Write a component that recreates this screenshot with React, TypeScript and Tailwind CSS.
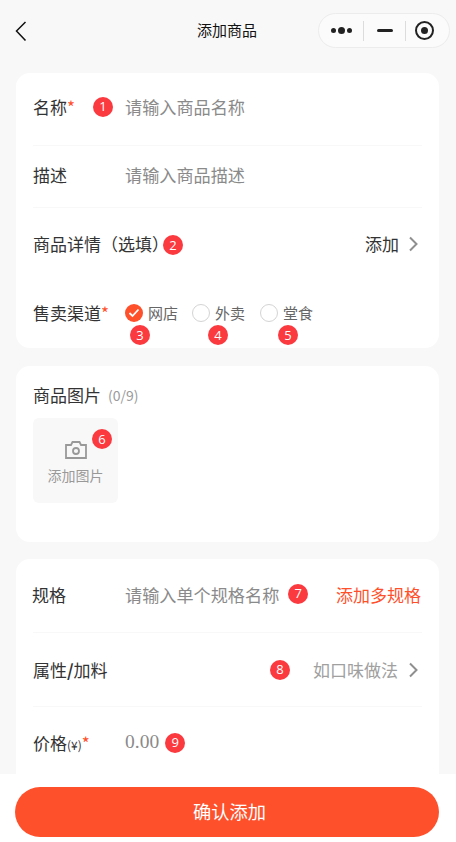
import React from "react";

const Badge = ({ n, className = "" }: { n: number; className?: string }) => (
  <span className={`flex h-5 w-5 shrink-0 items-center justify-center rounded-full bg-[#fb3a40] text-[13px] leading-none text-white ${className}`} style={{ fontFamily: '"Open Sans", sans-serif' }}>
    {n}
  </span>
);

const Star = () => <span className="text-[#ff4f2b]">*</span>;

const Chevron = () => (
  <svg width="10" height="16" viewBox="0 0 10 16" fill="none" className="shrink-0">
    <path d="M2 1.5 8.5 8 2 14.5" stroke="#8f8f8f" strokeWidth="2" />
  </svg>
);

const Channel = ({ label, checked, n, w, badge }: { label: string; checked?: boolean; n: number; w: string; badge: string }) => (
  <div className={`mt-[2px] flex flex-col ${w}`}>
    <div className="flex items-center gap-[5px]">
      {checked ? (
        <span className="flex h-[18px] w-[18px] items-center justify-center rounded-full bg-[#ff502c]">
          <svg width="12" height="10" viewBox="0 0 12 10" fill="none">
            <path d="M1.5 5 4.5 8 10.5 1.5" stroke="#fff" strokeWidth="1.8" />
          </svg>
        </span>
      ) : (
        <span className="h-[18px] w-[18px] rounded-full border-[1.5px] border-[#d4d4d4]" />
      )}
      <span className="w-[40px] whitespace-nowrap text-[15px] leading-5 text-[#666]">{label}</span>
    </div>
    <Badge n={n} className={`mt-[2px] ${badge}`} />
  </div>
);

export default function App() {
  return (
    <div
      className="flex h-[842px] w-[456px] flex-col overflow-hidden bg-[#f8f8f8] text-[17px] text-[#333]"
      style={{ fontFamily: '"Noto Sans CJK SC", sans-serif' }}
    >
      <header className="flex h-[73px] shrink-0 items-start justify-between pl-[15px] pr-[6px] pt-[13px]">
        <svg width="12" height="20" viewBox="0 0 12 20" fill="none" className="mt-[8px]">
          <path d="M10.5 1 1.5 10l9 9.5" stroke="#111" strokeWidth="1.5" />
        </svg>
        <span className="ml-[54px] mt-[5px] flex-1 pl-[116px] text-[15px] leading-[24px] text-[#111]">添加商品</span>
        <div className="flex h-[35px] w-[132px] items-center rounded-full border border-[#ececec] bg-[#fbfbfb]">
          <div className="flex w-[44px] items-center justify-center gap-[2px] pl-[1px]">
            <span className="h-[5px] w-[5px] rounded-full bg-[#222]" />
            <span className="h-[7px] w-[7px] rounded-full bg-[#222]" />
            <span className="h-[5px] w-[5px] rounded-full bg-[#222]" />
          </div>
          <span className="h-5 w-px bg-[#dcdcdc]" />
          <div className="flex w-[41px] justify-center">
            <span className="h-[3px] w-4 rounded-full bg-[#222]" />
          </div>
          <span className="h-5 w-px bg-[#dcdcdc]" />
          <div className="flex flex-1 justify-center pr-[6px]">
            <span className="flex h-[19px] w-[19px] items-center justify-center rounded-full border-2 border-[#222]">
              <span className="h-[7px] w-[7px] rounded-full bg-[#222]" />
            </span>
          </div>
        </div>
      </header>

      <main className="min-h-0 flex-1 overflow-hidden px-4">
        <section className="h-[275px] w-[423px] rounded-[14px] bg-white px-[17px]">
          <div className="flex h-[73px] items-center border-b border-[#f8f8f8] pb-[5px]">
            <span className="w-[60px] shrink-0">名称<Star /></span>
            <Badge n={1} />
            <span className="ml-[12px] text-[17.15px] text-[#8a8a8a]">请输入商品名称</span>
          </div>
          <div className="flex h-[62px] items-center border-b border-[#f8f8f8] pb-[4px]">
            <span className="w-[92px] shrink-0">描述</span>
            <span className="text-[17.15px] text-[#8a8a8a]">请输入商品描述</span>
          </div>
          <div className="flex h-[74px] items-center pb-[2px] pr-[4px]">
            <span>商品详情（选填）</span>
            <Badge n={2} className="-ml-[6px] mt-[2px]" />
            <span className="ml-auto mr-[9px]">添加</span>
            <Chevron />
          </div>
          <div className="flex items-start pt-[19px]">
            <span className="w-[92px] shrink-0 leading-[24px]">售卖渠道<Star /></span>
            <Channel label="网店" checked n={3} w="w-[67px]" badge="ml-[5px]" />
            <Channel label="外卖" n={4} w="w-[68px]" badge="ml-[16px]" />
            <Channel label="堂食" n={5} w="w-[68px]" badge="ml-[18px]" />
          </div>
        </section>

        <section className="mt-[18px] h-[176px] w-[423px] rounded-[14px] bg-white px-[17px] pt-[17px]">
          <div className="flex items-center leading-[24px]">
            <span>商品图片</span>
            <span className="ml-[7px] text-[14px] text-[#9a9a9a]">(0/9)</span>
          </div>
          <div className="relative mt-[11px] flex h-[85px] w-[85px] flex-col items-center rounded-[6px] bg-[#f8f8f8] pt-[23px]">
            <Badge n={6} className="absolute right-[6px] top-[11px]" />
            <svg width="22" height="18" viewBox="0 0 22 18" fill="none">
              <path d="M1 4h5l1.5-3h7L16 4h5v13H1z" stroke="#999" strokeWidth="1.8" />
              <circle cx="11" cy="10" r="3" stroke="#999" strokeWidth="1.8" />
            </svg>
            <span className="mt-[6px] text-[14px] leading-5 text-[#999]">添加图片</span>
          </div>
        </section>

        <section className="mt-[17px] h-[260px] w-[423px] rounded-t-[14px] bg-white px-[17px]">
          <div className="flex h-[74px] items-center border-b border-[#f8f8f8] pb-[2px]">
            <span className="w-[92px] shrink-0 -translate-x-px">规格</span>
            <span className="text-[17.15px] text-[#8a8a8a]">请输入单个规格名称</span>
            <Badge n={7} className="mb-[2px] ml-[9px]" />
            <span className="ml-auto -translate-x-px text-[#ff502c]">添加多规格</span>
          </div>
          <div className="flex h-[74px] items-center border-b border-[#f8f8f8] pr-[4px]">
            <span>属性<span className="font-bold">/</span>加料</span>
            <Badge n={8} className="ml-auto mr-[23px]" />
            <span className="mr-[10px] text-[#a0a0a0]">如口味做法</span>
            <Chevron />
          </div>
          <div className="flex h-[74px] items-center pb-[2px]">
            <span className="flex w-[92px] shrink-0 items-baseline">价格<span className="text-[12px]">(¥)</span><Star /></span>
            <span className="mb-[2px] text-[19.5px] text-[#8a8a8a]" style={{ fontFamily: '"Liberation Serif", serif' }}>0.00</span>
            <Badge n={9} className="mb-[1px] ml-[6px]" />
          </div>
        </section>
      </main>

      <footer className="flex h-[68px] shrink-0 items-start bg-white px-[15px] pt-[13px]">
        <button className="h-[50px] w-[424px] rounded-full bg-[#ff502c] pl-[5px] text-[18.3px] text-white">确认添加</button>
      </footer>
    </div>
  );
}
